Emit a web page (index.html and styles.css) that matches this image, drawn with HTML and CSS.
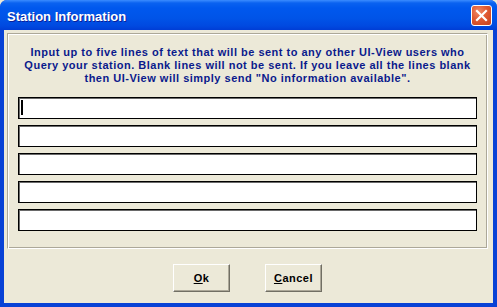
FILE: index.html
```html
<!DOCTYPE html>
<html lang="en">
  <head>
    <meta charset="UTF-8" />
    <title>Station Information</title>
    <link rel="stylesheet" href="styles.css">
  </head>
  <body>
    <div class="window">
      <div class="titlebar">
        <span class="title">Station Information</span>
        <button class="close" aria-label="Close">
          <svg width="13" height="13" viewBox="0 0 13 13">
            <path d="M2 2 L11 11 M11 2 L2 11" stroke="#fff" stroke-width="2.2" stroke-linecap="square" />
          </svg>
        </button>
      </div>
      <div class="content">
        <div class="panel">
          <p class="intro">
            Input up to five lines of text that will be sent to any other UI-View users who<br>
            Query your station. Blank lines will not be sent. If you leave all the lines blank<br>
            then UI-View will simply send "No information available".
          </p>
          <div class="fields">
            <div class="field"><span class="caret"></span></div>
            <div class="field"></div>
            <div class="field"></div>
            <div class="field"></div>
            <div class="field"></div>
          </div>
        </div>
        <div class="buttons">
          <button class="btn"><u>O</u>k</button>
          <button class="btn"><u>C</u>ancel</button>
        </div>
      </div>
    </div>
  </body>
</html>
```

FILE: styles.css
```css
* {
  margin: 0;
  padding: 0;
  box-sizing: border-box;
}
body {
  width: 497px;
  height: 307px;
  overflow: hidden;
  background: #ece9d8;
  font-family: 'Liberation Sans', Arial, sans-serif;
}
.window {
  width: 497px;
  height: 307px;
  display: flex;
  flex-direction: column;
  background: #0842d6;
  border-radius: 7px 7px 0 0;
  overflow: hidden;
}
.titlebar {
  height: 30px;
  flex: none;
  display: flex;
  align-items: center;
  justify-content: space-between;
  padding: 0 5px 0 7px;
  background: linear-gradient(#3b8cff 0, #0a62f0 3px, #0058ee 8px, #0054e8 18px, #0049e0 26px, #003dd5 30px);
}
.title {
  color: #fff;
  font-weight: 700;
  font-size: 13px;
  text-shadow: 1px 1px #0a1f9a;
  padding-top: 2px;
}
.close {
  width: 21px;
  height: 21px;
  border: 1px solid #fff;
  border-radius: 3px;
  background: radial-gradient(circle at 35% 30%, #f08a68 0, #e05a33 45%, #c8401c 100%);
  display: flex;
  align-items: center;
  justify-content: center;
  padding: 0;
  margin-top: 1px;
}
.content {
  flex: 1;
  margin: 0 4px 4px 4px;
  background: #ece9d8;
  padding: 3px 5px 0 3px;
  display: flex;
  flex-direction: column;
}
.panel {
  border: 1px solid;
  border-color: #aca899 #fff #fff #aca899;
  box-shadow: inset 1px 1px #fff, inset -1px -1px #aca899;
  padding: 12px 10px 17px 10px;
}
.intro {
  color: #0a1a8c;
  font-weight: 700;
  font-size: 11px;
  line-height: 13px;
  letter-spacing: 0.5px;
  text-align: center;
  margin-bottom: 12px;
}
.fields {
  display: flex;
  flex-direction: column;
  gap: 6px;
}
.field {
  height: 22px;
  background: #fff;
  border: 1px solid #000;
  box-shadow: inset 1px 1px #6a6a6a;
  padding: 2px 0 0 2px;
}
.caret {
  display: block;
  width: 2px;
  height: 15px;
  background: #000;
}
.buttons {
  display: flex;
  justify-content: center;
  gap: 35px;
  margin-top: 15px;
}
.btn {
  width: 57px;
  height: 28px;
  background: #ece9d8;
  border: 1px solid;
  border-color: #fff #716f64 #716f64 #fff;
  box-shadow: inset -1px -1px #aca899;
  font-family: 'Liberation Sans', Arial, sans-serif;
  font-weight: 700;
  font-size: 11px;
  letter-spacing: 0.5px;
  color: #000;
}
```
